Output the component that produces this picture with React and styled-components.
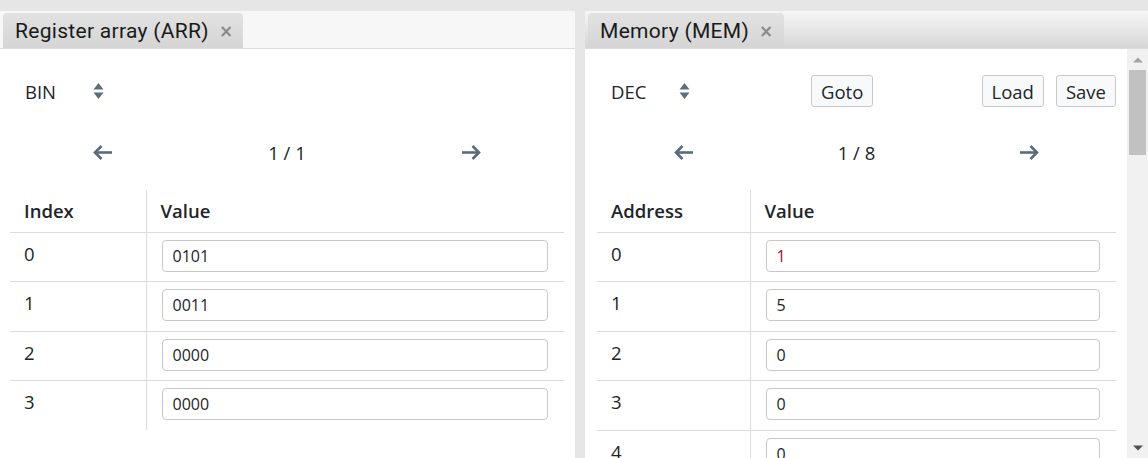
import { createGlobalStyle } from "styled-components";
import styled from "styled-components";

const GlobalStyle = createGlobalStyle`
  html, body {
    margin: 0;
    padding: 0;
    height: 100%;
    overflow: hidden;
    background: #e6e6e6;
    font-family: "Open Sans", "Liberation Sans", sans-serif;
    color: #212529;
  }
`;

const Page = styled.div`
  display: flex;
  gap: 10px;
  height: 100vh;
  padding-top: 11px;
  box-sizing: border-box;
`;

const Panel = styled.section`
  display: flex;
  flex-direction: column;
  background: #fff;
  width: ${(props) => (props.width ? props.width + "px" : "auto")};
  flex: ${(props) => (props.width ? "none" : "1")};
  min-width: 0;
  min-height: 0;
`;

const Header = styled.div`
  height: 37px;
  flex: none;
  display: flex;
  align-items: flex-end;
  padding-left: 3px;
  border-bottom: 1px solid #dcdcdc;
  background: ${(props) =>
    props.active ? "linear-gradient(#f6f6f6, #d6d6d6)" : "#f7f7f7"};
`;

const Tab = styled.div`
  height: 35px;
  display: flex;
  align-items: center;
  gap: 10px;
  padding: 0 10px 0 12px;
  border-radius: 4px 4px 0 0;
  background: linear-gradient(#e2e2e2, #d5d5d5);
  font-family: Roboto, "Liberation Sans", sans-serif;
  font-size: 21px;
  letter-spacing: 0.3px;
  color: #1a1a1a;
`;

const Close = styled.span`
  font-family: "DejaVu Sans", sans-serif;
  font-weight: bold;
  font-size: 17px;
  color: #8a8a8a;
`;

const BodyRow = styled.div`
  flex: 1;
  min-height: 0;
  display: flex;
`;

const Body = styled.div`
  flex: 1;
  min-width: 0;
  overflow: hidden;
  padding: 0 11px 0 ${(props) => props.padLeft}px;
`;

/* scrollbar of the memory view */
const Rail = styled.div`
  width: 21px;
  flex: none;
  display: flex;
  flex-direction: column;
  background: #f1f1f1;
`;

const RailButton = styled.div`
  height: 21px;
  display: flex;
  align-items: center;
  justify-content: center;
`;

const Thumb = styled.div`
  height: 85px;
  margin: 0 2px;
  background: #c1c1c1;
`;

const RailSpace = styled.div`
  flex: 1;
`;

const Toolbar = styled.div`
  display: grid;
  grid-template-columns: ${(props) => props.cols || "1fr"};
  align-items: center;
  height: 32px;
  margin-top: 26px;
`;

const Select = styled.div`
  display: grid;
  grid-template-columns: 68px auto;
  align-items: center;
  padding-left: ${(props) => props.pad}px;
  font-size: 18.5px;
`;

const Buttons = styled.div`
  display: flex;
  justify-content: flex-end;
  gap: 12px;
`;

const Button = styled.button`
  height: 32px;
  padding: 0 9px;
  font-family: "Open Sans", "Liberation Sans", sans-serif;
  font-size: 18.5px;
  color: #212529;
  background: #f8f9fa;
  border: 1px solid #c9c9c9;
  border-radius: 3px;
  justify-self: start;
`;

const Pager = styled.div`
  display: grid;
  grid-template-columns: 1fr 1fr 1fr;
  justify-items: center;
  align-items: center;
  height: 30px;
  margin-top: 30px;
  font-size: 18.5px;
  color: #212529;
`;

const Table = styled.table`
  width: 100%;
  border-collapse: collapse;
  margin-top: 23px;
  font-size: 18.5px;
  table-layout: fixed;
`;

const Th = styled.th`
  text-align: left;
  font-weight: 600;
  height: 42px;
  padding: 0 14px;
  box-sizing: border-box;
  border-bottom: 1px solid #dcdcdc;
  & + & {
    border-left: 1px solid #dcdcdc;
  }
`;

const Td = styled.td`
  vertical-align: top;
  height: 49.6px;
  padding: 7px 14px 0;
  box-sizing: border-box;
  border-bottom: 1px solid #dcdcdc;
  & + & {
    border-left: 1px solid #dcdcdc;
    padding: 7px 16px 0 15px;
  }
  tr:last-child > & {
    border-bottom: none;
  }
`;

const RowIndex = styled.div`
  margin-top: 1px;
`;

const Input = styled.div`
  height: 32px;
  box-sizing: border-box;
  border: 1px solid #c8c8c8;
  border-radius: 4px;
  padding: 0 10px;
  display: flex;
  align-items: center;
  font-size: 16px;
  color: ${(props) => (props.changed ? "#a01818" : "#212529")};
`;

const SortIcon = () => (
  <svg width="11" height="18" viewBox="0 0 11 18">
    <path d="M5.5 1 L10.5 7.5 H0.5 Z" fill="#5d6d7e" />
    <path d="M5.5 17 L10.5 10.5 H0.5 Z" fill="#5d6d7e" />
  </svg>
);

const Arrow = ({ dir }) => (
  <svg
    width="21"
    height="17"
    viewBox="0 0 21 17"
    fill="none"
    stroke="#5a6b7c"
    strokeWidth="2.6"
    style={{ transform: dir === "right" ? "scaleX(-1)" : "none" }}
  >
    <path d="M20 8.5 H3" />
    <path d="M9.5 2 L3 8.5 L9.5 15" strokeLinejoin="miter" />
  </svg>
);

const Triangle = ({ up, color }) => (
  <svg width="10" height="6" viewBox="0 0 10 6">
    <path d={up ? "M5 0.5 L10 5.5 H0 Z" : "M5 5.5 L10 0.5 H0 Z"} fill={color} />
  </svg>
);

const ScrollRail = () => (
  <Rail>
    <RailButton>
      <Triangle up color="#a3a3a3" />
    </RailButton>
    <Thumb />
    <RailSpace />
    <RailButton>
      <Triangle color="#505050" />
    </RailButton>
  </Rail>
);

const Pagination = ({ page }) => (
  <Pager>
    <Arrow dir="left" />
    <span>{page}</span>
    <Arrow dir="right" />
  </Pager>
);

const DataTable = ({ label, width, rows }) => (
  <Table>
    <colgroup>
      <col style={{ width }} />
      <col />
    </colgroup>
    <thead>
      <tr>
        <Th>{label}</Th>
        <Th>Value</Th>
      </tr>
    </thead>
    <tbody>
      {rows.map((row, i) => (
        <tr key={i}>
          <Td>
            <RowIndex>{i}</RowIndex>
          </Td>
          <Td>
            <Input changed={row.changed}>{row.value}</Input>
          </Td>
        </tr>
      ))}
    </tbody>
  </Table>
);

const arrRows = [
  { value: "0101" },
  { value: "0011" },
  { value: "0000" },
  { value: "0000" },
];

const memRows = Array.from({ length: 32 }, (_, i) => {
  if (i === 0) return { value: "1", changed: true };
  if (i === 1) return { value: "5" };
  return { value: "0" };
});

export default function App() {
  return (
    <>
      <GlobalStyle />
      <Page>
        <Panel width={575}>
          <Header>
            <Tab>
              Register array (ARR) <Close>×</Close>
            </Tab>
          </Header>
          <BodyRow>
            <Body padLeft={10}>
              <Toolbar>
                <Select pad={15}>
                  BIN <SortIcon />
                </Select>
              </Toolbar>
              <Pagination page="1 / 1" />
              <DataTable label="Index" width="136px" rows={arrRows} />
            </Body>
          </BodyRow>
        </Panel>
        <Panel>
          <Header active>
            <Tab>
              Memory (MEM) <Close>×</Close>
            </Tab>
          </Header>
          <BodyRow>
            <Body padLeft={12}>
              <Toolbar cols="214px auto 1fr">
                <Select pad={14}>
                  DEC <SortIcon />
                </Select>
                <Button>Goto</Button>
                <Buttons>
                  <Button>Load</Button>
                  <Button>Save</Button>
                </Buttons>
              </Toolbar>
              <Pagination page="1 / 8" />
              <DataTable label="Address" width="153px" rows={memRows} />
            </Body>
            <ScrollRail />
          </BodyRow>
        </Panel>
      </Page>
    </>
  );
}
